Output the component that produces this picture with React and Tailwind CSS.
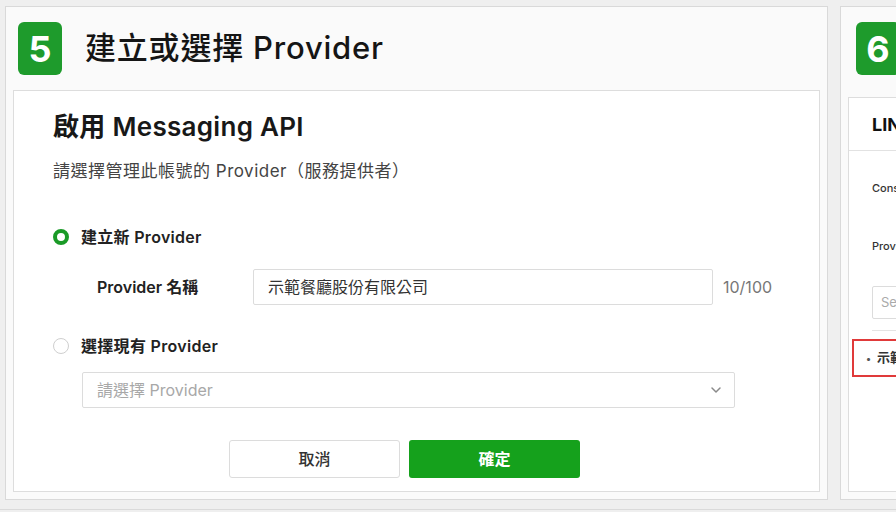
import React from 'react';

const Badge = ({ n }) => (
  <div className="w-[44px] h-[53px] rounded-[6px] bg-[#1e9b2c] flex items-center justify-center text-white text-[36px] font-bold leading-none shrink-0">
    {n}
  </div>
);

const Radio = ({ checked }) =>
  checked ? (
    <span className="w-[16px] h-[16px] rounded-full border-[4px] border-[#1a9a27] bg-white shrink-0" />
  ) : (
    <span className="w-[16px] h-[16px] rounded-full border-[1.5px] border-[#cfcfcf] bg-white shrink-0" />
  );

export default function App() {
  return (
    <div className="w-[896px] h-[512px] overflow-hidden bg-[#efefef] font-[Inter,'Noto_Sans_CJK_TC',sans-serif] text-[#1a1a1a]">
      <div className="flex pl-[5px] pt-[6px] gap-[12px]">
        {/* 第 5 步 */}
        <div className="w-[823px] h-[494px] shrink-0 border border-[#d9d9d9] bg-[#fafafa] flex flex-col">
          <div className="h-[83px] flex items-center pl-[12px] gap-[23px] shrink-0">
            <Badge n="5" />
            <h1 className="text-[31px] font-medium tracking-[0.8px] text-[#151515]">建立或選擇 Provider</h1>
          </div>
          <div className="flex-1 mx-[7px] mb-[7px] border border-[#dddddd] bg-white pl-[39px] pt-[20px]">
            <h2 className="text-[26px] leading-[32px] font-semibold tracking-[0.3px] text-[#181818]">啟用 Messaging API</h2>
            <p className="mt-[16px] text-[17px] leading-[24px] tracking-[0.5px] text-[#444]">請選擇管理此帳號的 Provider（服務提供者）</p>

            <div className="mt-[42px] h-[24px] flex items-center gap-[12px]">
              <Radio checked />
              <span className="text-[16px] font-semibold tracking-[0.3px] text-[#222]">建立新 Provider</span>
            </div>

            <div className="mt-[20px] h-[36px] flex items-center">
              <span className="ml-[44px] w-[156px] text-[16px] font-semibold text-[#222]">Provider 名稱</span>
              <div className="w-[460px] h-[36px] border border-[#dcdcdc] rounded-[2px] flex items-center pl-[14px] text-[16px] text-[#333]">
                示範餐廳股份有限公司
              </div>
              <span className="ml-[10px] text-[16px] text-[#777]">10/100</span>
            </div>

            <div className="mt-[29px] h-[24px] flex items-center gap-[12px]">
              <Radio />
              <span className="text-[16px] font-semibold tracking-[0.3px] text-[#222]">選擇現有 Provider</span>
            </div>

            <div className="mt-[14px] ml-[29px] w-[653px] h-[36px] border border-[#dcdcdc] rounded-[2px] flex items-center justify-between pl-[14px] pr-[12px]">
              <span className="text-[16px] text-[#a8a8a8]">請選擇 Provider</span>
              <svg width="12" height="8" viewBox="0 0 12 8" fill="none" stroke="#8a8a8a" strokeWidth="1.5" strokeLinecap="round" strokeLinejoin="round">
                <path d="M2 2l4 4 4-4" />
              </svg>
            </div>

            <div className="mt-[32px] ml-[176px] flex gap-[9px]">
              <button className="w-[171px] h-[38px] border border-[#dcdcdc] rounded-[3px] bg-white text-[16px] font-medium text-[#333]">取消</button>
              <button className="w-[171px] h-[38px] rounded-[3px] bg-[#15a11c] text-[16px] font-semibold text-white">確定</button>
            </div>
          </div>
        </div>

        {/* 第 6 步 */}
        <div className="w-[400px] h-[494px] shrink-0 border border-[#d9d9d9] bg-[#fafafa] flex flex-col">
          <div className="h-[83px] flex items-center pl-[15px] gap-[23px] shrink-0">
            <Badge n="6" />
            <h1 className="text-[31px] font-medium text-[#151515]">建立 Channel</h1>
          </div>
          <div className="flex-1 mx-[7px] mb-[7px] mt-[7px] border border-[#dddddd] bg-white flex flex-col">
            <div className="h-[53px] border-b border-[#e2e2e2] flex items-center pl-[23px] text-[18px] font-bold text-[#111]">LINE Developers</div>
            <div className="pl-[23px] pr-[16px]">
              <div className="mt-[29px] text-[11px] font-medium text-[#333]">Console name</div>
              <div className="mt-[41px] text-[11px] font-medium text-[#333]">Provider</div>
              <div className="mt-[32px] w-[300px] h-[33px] border border-[#dcdcdc] rounded-[2px] flex items-center pl-[8px] text-[13px] text-[#aaa]">Select provider</div>
              <div className="mt-[11px] w-[300px] border-t border-[#e4e4e4]" />
            </div>
            <div className="ml-[3px] mt-[8px] w-[300px] h-[38px] border-2 border-[#e03a3a] flex items-center gap-[6px] pl-[12px] text-[13px] font-semibold text-[#333]">
              <span className="text-[10px] text-[#555]">•</span>
              <span>示範餐廳股份有限公司</span>
            </div>
          </div>
        </div>
      </div>
      <div className="mt-[9px] border-t border-[#dadada]" />
    </div>
  );
}
